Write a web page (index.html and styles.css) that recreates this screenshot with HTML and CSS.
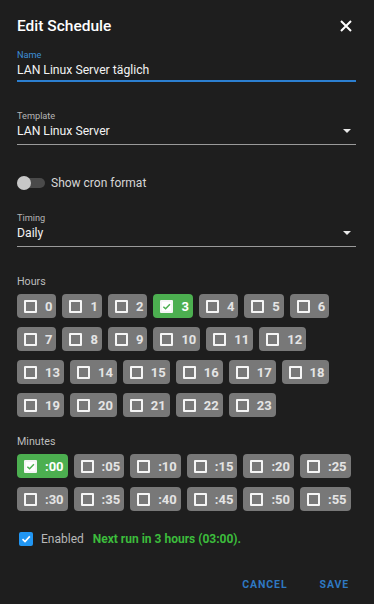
FILE: index.html
```html
<!DOCTYPE html>
<html lang="de">
<head>
<meta charset="utf-8">
<title>Edit Schedule</title>
<link rel="stylesheet" href="styles.css">
</head>
<body>
<div class="dialog">
  <div class="header">
    <h1 class="title">Edit Schedule</h1>
    <svg class="close" width="12" height="12" viewBox="0 0 12 12"><path d="M1 1L11 11M11 1L1 11" stroke="#fff" stroke-width="2"/></svg>
  </div>

  <div class="field field-name focused">
    <div class="label">Name</div>
    <div class="value">LAN Linux Server täglich</div>
  </div>

  <div class="field field-template select">
    <div class="label">Template</div>
    <div class="value">LAN Linux Server<span class="arrow"></span></div>
  </div>

  <div class="toggle-row">
    <span class="switch"><span class="thumb"></span></span>
    <span class="toggle-label">Show cron format</span>
  </div>

  <div class="field field-timing select">
    <div class="label">Timing</div>
    <div class="value">Daily<span class="arrow"></span></div>
  </div>

  <div class="group-label hours-label">Hours</div>
  <div class="chips">
    <span class="chip"><span class="box"></span>0</span>
    <span class="chip"><span class="box"></span>1</span>
    <span class="chip"><span class="box"></span>2</span>
    <span class="chip on"><span class="box"><svg width="9" height="9" viewBox="0 0 10 10"><path d="M1.5 5.2L4 7.6L8.8 2.4" fill="none" stroke="#4caf50" stroke-width="1.6"/></svg></span>3</span>
    <span class="chip"><span class="box"></span>4</span>
    <span class="chip"><span class="box"></span>5</span>
    <span class="chip"><span class="box"></span>6</span>
    <span class="chip"><span class="box"></span>7</span>
    <span class="chip"><span class="box"></span>8</span>
    <span class="chip"><span class="box"></span>9</span>
    <span class="chip"><span class="box"></span>10</span>
    <span class="chip"><span class="box"></span>11</span>
    <span class="chip"><span class="box"></span>12</span>
    <span class="chip"><span class="box"></span>13</span>
    <span class="chip"><span class="box"></span>14</span>
    <span class="chip"><span class="box"></span>15</span>
    <span class="chip"><span class="box"></span>16</span>
    <span class="chip"><span class="box"></span>17</span>
    <span class="chip"><span class="box"></span>18</span>
    <span class="chip"><span class="box"></span>19</span>
    <span class="chip"><span class="box"></span>20</span>
    <span class="chip"><span class="box"></span>21</span>
    <span class="chip"><span class="box"></span>22</span>
    <span class="chip"><span class="box"></span>23</span>
  </div>

  <div class="group-label minutes-label">Minutes</div>
  <div class="chips">
    <span class="chip on"><span class="box"><svg width="9" height="9" viewBox="0 0 10 10"><path d="M1.5 5.2L4 7.6L8.8 2.4" fill="none" stroke="#4caf50" stroke-width="1.6"/></svg></span>:00</span>
    <span class="chip"><span class="box"></span>:05</span>
    <span class="chip"><span class="box"></span>:10</span>
    <span class="chip"><span class="box"></span>:15</span>
    <span class="chip"><span class="box"></span>:20</span>
    <span class="chip"><span class="box"></span>:25</span>
    <span class="chip"><span class="box"></span>:30</span>
    <span class="chip"><span class="box"></span>:35</span>
    <span class="chip"><span class="box"></span>:40</span>
    <span class="chip"><span class="box"></span>:45</span>
    <span class="chip"><span class="box"></span>:50</span>
    <span class="chip"><span class="box"></span>:55</span>
  </div>

  <div class="enabled-row">
    <span class="cb"><svg width="10" height="10" viewBox="0 0 10 10"><path d="M1.5 5.2L4 7.6L8.8 2.4" fill="none" stroke="#fff" stroke-width="1.6"/></svg></span>
    <span class="enabled-label">Enabled</span>
    <span class="next-run">Next run in 3 hours (03:00).</span>
  </div>

  <div class="actions">
    <span class="btn">CANCEL</span>
    <span class="btn">SAVE</span>
  </div>
</div>
</body>
</html>
```

FILE: styles.css
```css
html, body {
  margin: 0;
  padding: 0;
  background: #1e1e1e;
  font-family: Roboto, "Liberation Sans", sans-serif;
  color: #fff;
}

.dialog {
  padding: 16px 18px 0 17px;
  height: 604px;
  box-sizing: border-box;
}

.header {
  display: flex;
  justify-content: space-between;
  align-items: center;
  height: 20px;
}

.title {
  margin: 0;
  font-size: 15.5px;
  font-weight: 500;
  line-height: 20px;
  color: #fff;
}

.close {
  margin-right: 4px;
}

.field .label {
  font-size: 9.2px;
  line-height: 12px;
  color: #b5b5b5;
}

.field .value {
  position: relative;
  font-size: 12.2px;
  line-height: 18px;
  color: #f2f2f2;
}

.field-name {
  margin-top: 13px;
  padding-bottom: 1px;
  border-bottom: 2px solid #2c7fd0;
}

.field-name .label {
  color: #3d8fd8;
}

.select {
  padding-bottom: 4px;
  border-bottom: 1px solid #9a9a9a;
}

.field-template {
  margin-top: 28px;
}

.field-timing {
  margin-top: 19px;
}

.arrow {
  position: absolute;
  right: 5px;
  top: 7px;
  width: 0;
  height: 0;
  border-left: 4px solid transparent;
  border-right: 4px solid transparent;
  border-top: 4px solid #e8e8e8;
}

.toggle-row {
  margin-top: 28px;
  height: 20px;
  display: flex;
  align-items: center;
}

.switch {
  position: relative;
  width: 28px;
  height: 10px;
  border-radius: 5px;
  background: #4a4a4a;
  margin-right: 6px;
}

.thumb {
  position: absolute;
  left: 0;
  top: -2px;
  width: 14px;
  height: 14px;
  border-radius: 50%;
  background: #c8c8c8;
}

.toggle-label {
  font-size: 12px;
  color: #d6d6d6;
}

.group-label {
  font-size: 10.7px;
  line-height: 14px;
  color: #bdbdbd;
}

.hours-label {
  margin-top: 28px;
}

.minutes-label {
  margin-top: 18px;
}

.chips {
  margin-top: 5px;
  width: 336px;
  display: flex;
  flex-wrap: wrap;
  column-gap: 6px;
  row-gap: 9px;
}

.chip {
  display: inline-flex;
  align-items: center;
  height: 24px;
  padding: 0 4px 0 7px;
  border-radius: 4px;
  background: #787878;
  font-size: 13px;
  font-weight: 700;
  color: #e4e4e4;
}

.chip .box {
  width: 9px;
  height: 9px;
  border: 2px solid #f5f5f5;
  border-radius: 1px;
  margin-right: 8px;
  display: flex;
  align-items: center;
  justify-content: center;
}

.chip.on {
  background: #4caf50;
  color: #fff;
}

.chip.on .box {
  background: #fff;
}

.enabled-row {
  margin-top: 18px;
  height: 20px;
  display: flex;
  align-items: center;
  padding-left: 2px;
}

.cb {
  width: 14px;
  height: 14px;
  border-radius: 2px;
  background: #2196f3;
  display: flex;
  align-items: center;
  justify-content: center;
  margin-right: 8px;
}

.enabled-label {
  font-size: 12px;
  color: #b8b8b8;
  margin-right: 9px;
}

.next-run {
  font-size: 12px;
  font-weight: 700;
  color: #3cbc3c;
}

.actions {
  margin-top: 28px;
  display: flex;
  justify-content: flex-end;
  gap: 32px;
  padding-right: 7px;
}

.btn {
  font-size: 10.5px;
  font-weight: 700;
  letter-spacing: 0.9px;
  line-height: 16px;
  color: #2f78c2;
}
```
